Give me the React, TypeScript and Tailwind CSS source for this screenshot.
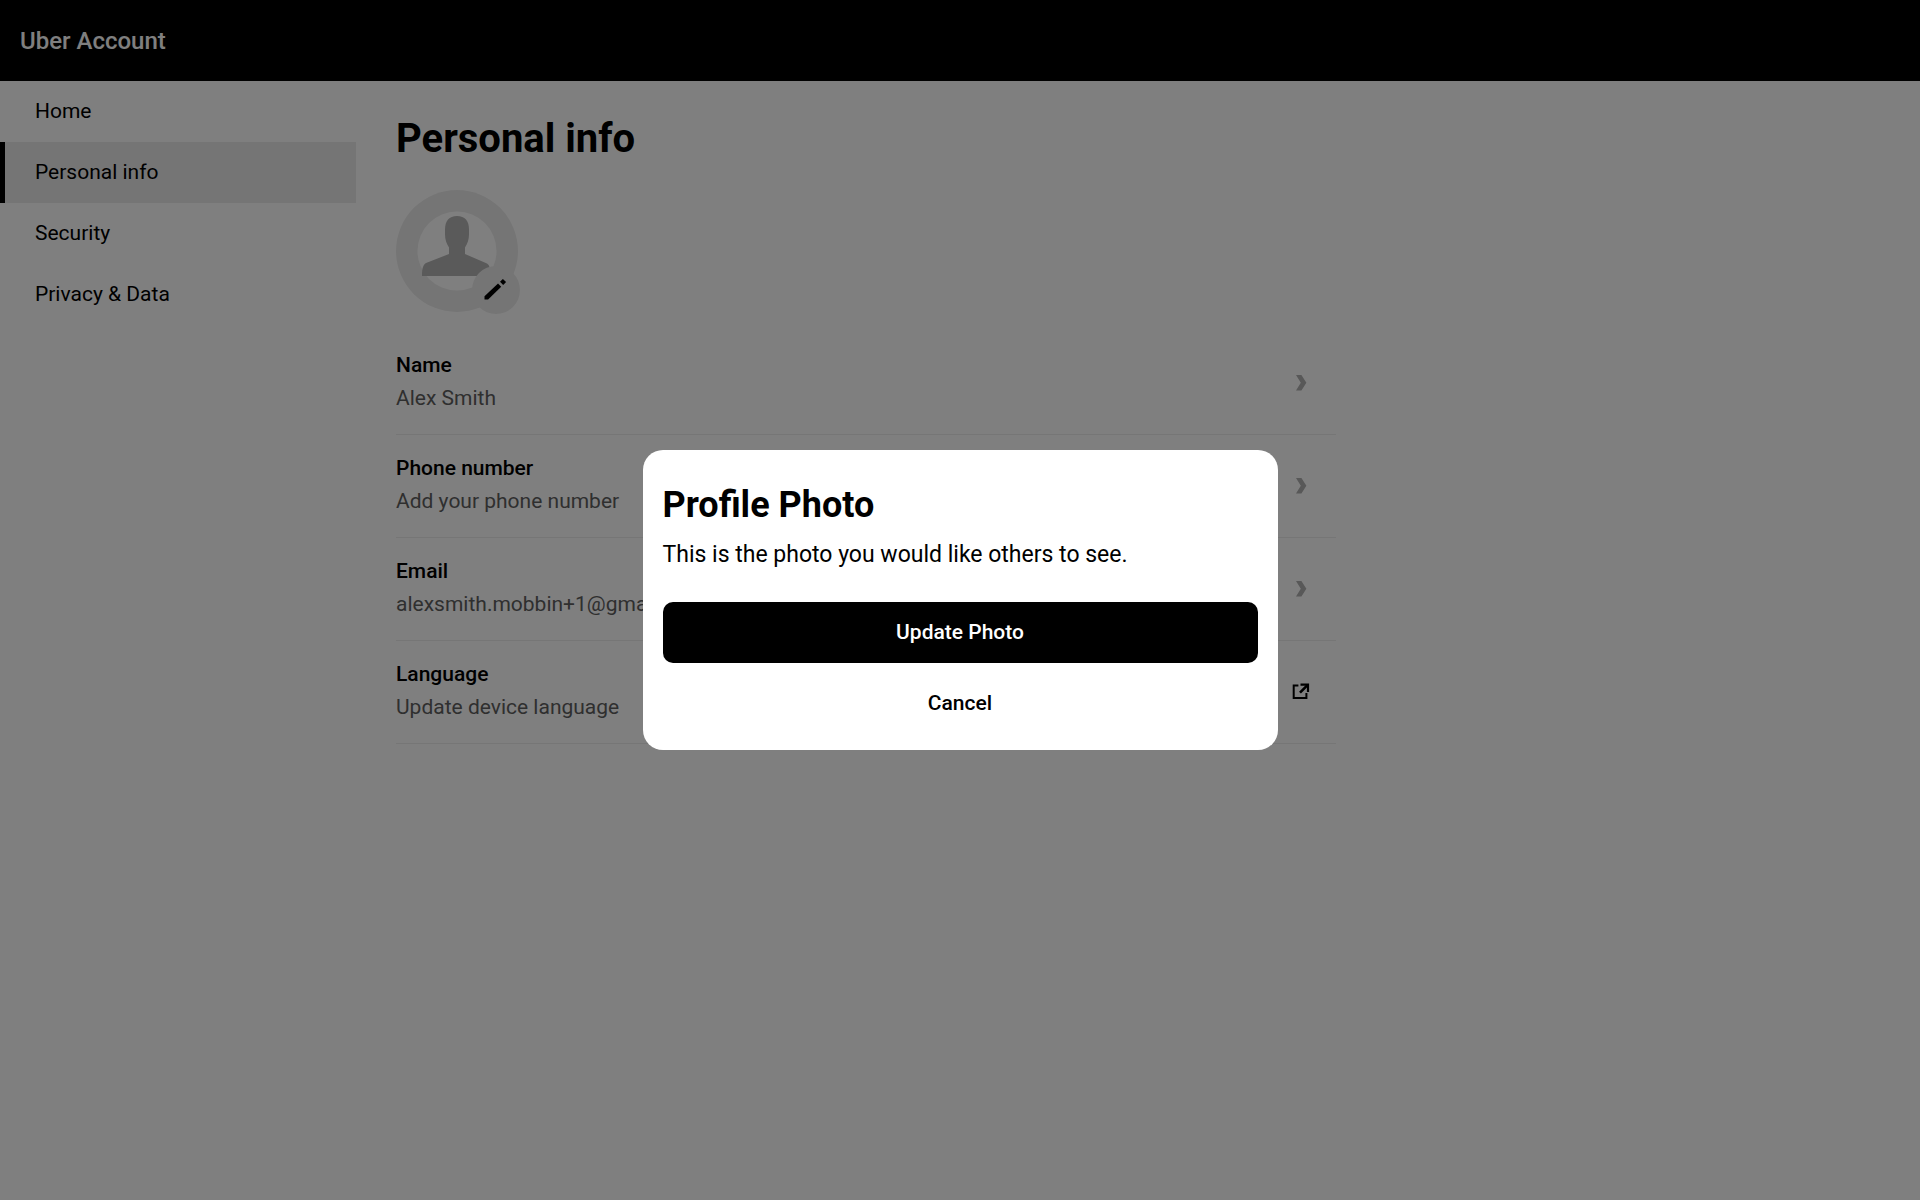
import type { ReactNode } from "react";

const navItems = [
  { label: "Home", active: false },
  { label: "Personal info", active: true },
  { label: "Security", active: false },
  { label: "Privacy & Data", active: false },
];

const rows = [
  { label: "Name", value: "Alex Smith", external: false },
  { label: "Phone number", value: "Add your phone number", external: false },
  { label: "Email", value: "alexsmith.mobbin+1@gmail.com", external: false },
  { label: "Language", value: "Update device language", external: true },
];

function ChevronIcon() {
  return (
    <svg width="20" height="20" viewBox="0 0 20 20" fill="#b0b0b0" aria-hidden>
      <path d="M5 2h5.4l5 7.8-5 7.8H5l4.8-7.8z" />
    </svg>
  );
}

function ExternalIcon() {
  return (
    <svg width="20" height="20" viewBox="0 0 20 20" fill="none" stroke="#000" strokeWidth="2" aria-hidden>
      <path d="M7.4 3.6H2.7v12.5h12.7v-5" />
      <path d="M9.5 2.6H17v7.3" strokeWidth="2.2" />
      <path d="M16.5 3.1 9 10.6" strokeWidth="2.6" />
    </svg>
  );
}

function PencilIcon() {
  return (
    <svg width="24" height="24" viewBox="0 0 24 24" fill="#000" aria-hidden>
      <path d="M14 5.4 17.2 8.7 4.1 21.5H.5V18.3z" />
      <path d="M18.9.9l3.2 3.2L19.2 7 16 3.7z" />
    </svg>
  );
}

function Avatar() {
  return (
    <svg className="size-full" viewBox="0 0 122 122" aria-hidden>
      <circle cx="61" cy="61" r="61" fill="#ebebeb" />
      <circle cx="61" cy="61" r="39.5" fill="#fff" />
      <path
        fill="#b5b5b5"
        d="M61 26c8 0 12 5 12 13.5v5c0 5-1.5 9-4 13V64l22 9.500c2.500 1.500 3.500 5 3.500 12.500H26c0-7.500 1-11 4-13l23-9v-6.500c-2.500-4-4-8-4-13v-5C49 31 53 26 61 26z"
      />
    </svg>
  );
}

function InfoRow({ label, value, icon }: { label: string; value: string; icon: ReactNode }) {
  return (
    <li className="border-b border-[#ececec]">
      <a href="#" className="flex items-center justify-between pt-[18px] pr-[25px] pb-[19px]">
        <span className="flex flex-col gap-0.5">
          <span className="text-[21px] leading-[30px] font-medium">{label}</span>
          <span className="text-[21px] leading-[33px] text-[#5e5e5e]">{value}</span>
        </span>
        {icon}
      </a>
    </li>
  );
}

export default function App() {
  return (
    <div className="min-h-screen bg-white font-['Roboto',sans-serif] text-black">
      <header className="flex h-[81px] items-center bg-black px-5">
        <span className="text-[24px] leading-[30px] font-medium text-white">Uber Account</span>
      </header>

      <div className="flex">
        <nav className="w-[356px] shrink-0">
          {navItems.map((item) => (
            <a
              key={item.label}
              href="#"
              aria-current={item.active ? "page" : undefined}
              className={`flex h-[61px] items-center border-l-[5px] pl-[30px] text-[21px] leading-[33px] ${
                item.active ? "border-black bg-[#ebebeb]" : "border-transparent"
              }`}
            >
              {item.label}
            </a>
          ))}
        </nav>

        <main className="ml-10 w-full max-w-[940px] pt-[33px]">
          <h1 className="text-[40px] leading-[50px] font-bold">Personal info</h1>
          <button type="button" aria-label="Edit profile photo" className="relative mt-[26px] block size-[122px]">
            <Avatar />
            <span className="absolute -right-0.5 -bottom-0.5 flex size-12 items-center justify-center rounded-full bg-[#ebebeb]">
              <PencilIcon />
            </span>
          </button>
          <ul className="mt-5">
            {rows.map((row) => (
              <InfoRow
                key={row.label}
                label={row.label}
                value={row.value}
                icon={row.external ? <ExternalIcon /> : <ChevronIcon />}
              />
            ))}
          </ul>
        </main>
      </div>

      {/* Profile photo dialog */}
      <div className="fixed inset-0 flex items-center justify-center bg-black/50">
        <div
          role="dialog"
          aria-modal="true"
          aria-labelledby="photo-title"
          className="w-full max-w-[635px] rounded-[20px] bg-white px-5 pt-[33px] pb-4"
        >
          <h2 id="photo-title" className="text-[36px] leading-[44px] font-bold">
            Profile Photo
          </h2>
          <p className="mt-3 text-[23px] leading-[32px]">This is the photo you would like others to see.</p>
          <div className="mt-[31px] flex flex-col gap-2.5">
            <button type="button" className="h-[61px] rounded-[10px] bg-black text-[21px] leading-[33px] font-medium text-white">
              Update Photo
            </button>
            <button type="button" className="h-[61px] rounded-[10px] text-[21px] leading-[33px] font-medium">
              Cancel
            </button>
          </div>
        </div>
      </div>
    </div>
  );
}
